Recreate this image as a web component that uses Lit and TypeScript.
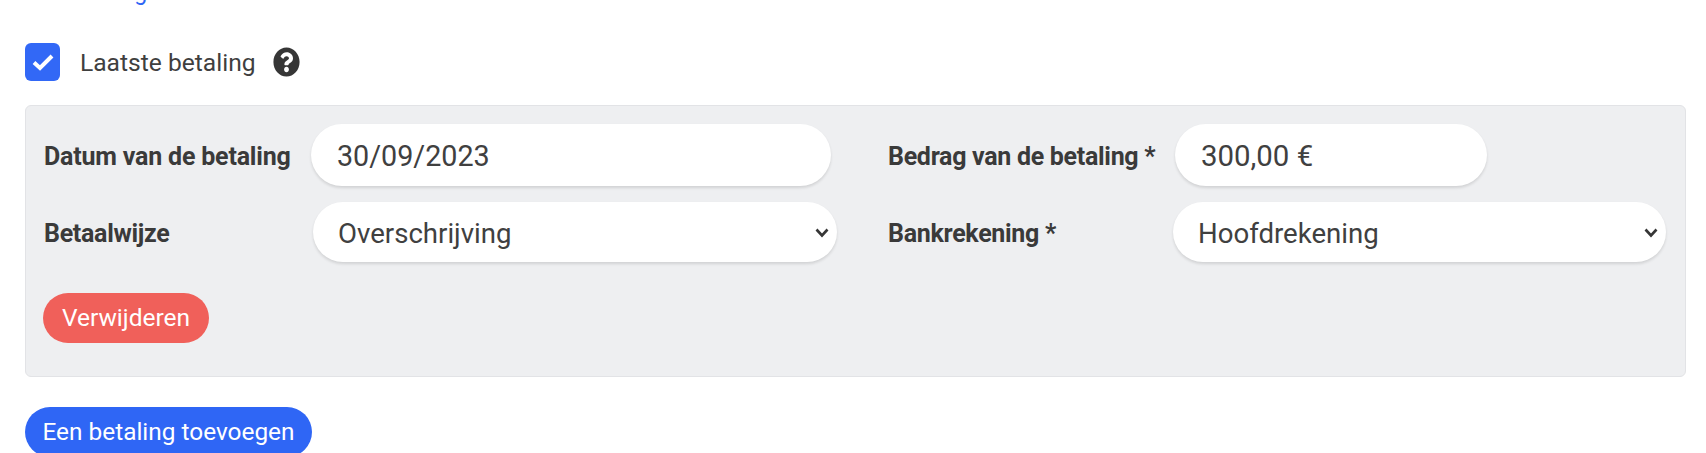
import { LitElement, html, css } from "lit";
import { customElement } from "lit/decorators.js";

@customElement("app-root")
export class AppRoot extends LitElement {
  static styles = css`
    :host { display: block; width: 1706px; height: 453px; overflow: hidden; background: #fff; font-family: Roboto, "Liberation Sans", sans-serif; color: #363636; }
    * { box-sizing: border-box; }
    .page { padding: 0 20px 0 25px; }
    .top-link { display: block; height: 0; font-size: 23px; line-height: 26px; color: #2f66f5; transform: translateY(-20px); text-decoration: none; }
    .check-row { display: flex; align-items: center; height: 38px; margin-top: 43px; }
    .check { width: 35px; height: 38px; border-radius: 6px; background: #3268f6; display: flex; align-items: center; justify-content: center; }
    .check-label { font-size: 24.6px; margin-left: 20px; color: #3f3f3f; }
    .help { margin-left: 17px; width: 27px; height: 30px; display: block; }
    .panel { margin-top: 24px; width: 1661px; height: 272px; background: #eeeff1; border: 1px solid #e2e3e6; border-radius: 6px; padding: 18px 18px 0; }
    .row { display: grid; grid-template-columns: 267px 527px 50px 287px 1fr; align-items: center; height: 62px; }
    .row + .row { margin-top: 15px; }
    label { font-size: 25px; font-weight: 700; color: #3a3a3a; letter-spacing: -0.3px; padding-top: 2px; }
    label.wide { letter-spacing: -0.2px; }
    .field { font: 400 27.6px Roboto, sans-serif; color: #404040; height: 62px; border: none; border-radius: 31px; background: #fff; box-shadow: 0 2px 3px rgba(10,10,10,.12); padding: 2px 26px 0; outline: none; }
    .date { width: 520px; font-size: 28.7px; }
    .amount { width: 312px; font-size: 29.4px; }
    .select-wrap { position: relative; display: block; height: 60px; }
    .select-wrap svg { position: absolute; right: 8px; top: 26px; pointer-events: none; }
    select.field { appearance: none; -webkit-appearance: none; height: 60px; padding: 2px 30px 0 25px; width: 100%; }
    .sel-a { width: 524px; margin-left: 2px; }
    .sel-b { width: 493px; margin-left: -2px; }
    .btn { display: block; border: none; color: #fff; font: 400 24.5px Roboto, sans-serif; border-radius: 25px; padding: 0 0 2px; }
    .remove { margin-top: 30px; margin-left: -1px; width: 166px; height: 50px; background: #f0605a; }
    .add { margin-top: 30px; width: 287px; height: 50px; background: #2f66f5; font-size: 24.4px; }
  `;

  private chevron() {
    return html`<svg width="14" height="10" viewBox="0 0 14 10"><path d="M1.500 1.500 L7 7.500 L12.500 1.500" fill="none" stroke="#363636" stroke-width="2.600"/></svg>`;
  }

  render() {
    return html`<div class="page">
      <a class="top-link">Aanbetaling</a>
      <div class="check-row">
        <div class="check">
          <svg width="24" height="20" viewBox="0 0 24 20"><path d="M3 10.500 L9 16 L21 4" fill="none" stroke="#fff" stroke-width="4"/></svg>
        </div>
        <span class="check-label">Laatste betaling</span>
        <svg class="help" viewBox="0 0 512 512" preserveAspectRatio="none"><path fill="#363636" d="M504 256c0 137-111 248-248 248S8 393 8 256 119 8 256 8s248 111 248 248zM262.700 90c-54.500 0-89.300 23-116.500 63.800-3.500 5.300-2.400 12.400 2.700 16.300l34.700 26.300c5.200 3.900 12.600 3 16.700-2.100 17.900-22.700 30.100-35.800 57.300-35.800 20.400 0 45.700 13.100 45.700 32.900 0 15-12.400 22.700-32.500 34C247.100 238.500 216 254.900 216 296v4c0 6.600 5.400 12 12 12h56c6.600 0 12-5.400 12-12v-1.300c0-28.500 83.200-29.700 83.200-106.700 0-58-60.200-102-116.500-102zM256 338c-25.400 0-46 20.600-46 46 0 25.400 20.600 46 46 46s46-20.600 46-46c0-25.400-20.600-46-46-46z"/></svg>
      </div>
      <div class="panel">
        <div class="row">
          <label class="wide">Datum van de betaling</label>
          <input class="field date" .value=${"30/09/2023"} />
          <span></span>
          <label>Bedrag van de betaling *</label>
          <input class="field amount" .value=${"300,00 €"} />
        </div>
        <div class="row">
          <label>Betaalwijze</label>
          <span class="select-wrap sel-a"><select class="field"><option>Overschrijving</option></select>${this.chevron()}</span>
          <span></span>
          <label>Bankrekening *</label>
          <span class="select-wrap sel-b"><select class="field"><option>Hoofdrekening</option></select>${this.chevron()}</span>
        </div>
        <button class="btn remove">Verwijderen</button>
      </div>
      <button class="btn add">Een betaling toevoegen</button>
    </div>`;
  }
}
